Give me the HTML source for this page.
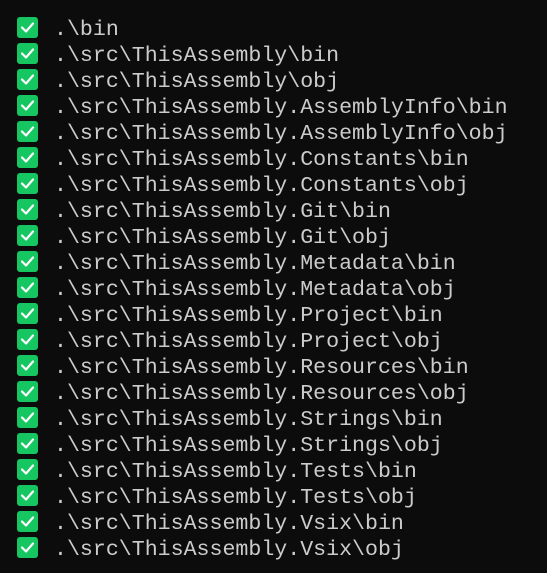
<!DOCTYPE html>
<html><head><style>
html,body{margin:0;padding:0;background:#0c0c0c;width:547px;height:573px;overflow:hidden}
.l{position:absolute;left:0;height:26px}
.b{position:absolute;left:17px;top:0;width:21px;height:21px;background:#16c660;border-radius:3px}
.b svg{position:absolute;left:0;top:0}
.t{position:absolute;left:54px;top:0;font-family:"Liberation Mono",monospace;font-size:21.6px;line-height:26px;color:#cccccc;white-space:pre}
</style></head><body>
<div id="c"></div>
<script>
const items=[".\\bin",".\\src\\ThisAssembly\\bin",".\\src\\ThisAssembly\\obj",".\\src\\ThisAssembly.AssemblyInfo\\bin",".\\src\\ThisAssembly.AssemblyInfo\\obj",".\\src\\ThisAssembly.Constants\\bin",".\\src\\ThisAssembly.Constants\\obj",".\\src\\ThisAssembly.Git\\bin",".\\src\\ThisAssembly.Git\\obj",".\\src\\ThisAssembly.Metadata\\bin",".\\src\\ThisAssembly.Metadata\\obj",".\\src\\ThisAssembly.Project\\bin",".\\src\\ThisAssembly.Project\\obj",".\\src\\ThisAssembly.Resources\\bin",".\\src\\ThisAssembly.Resources\\obj",".\\src\\ThisAssembly.Strings\\bin",".\\src\\ThisAssembly.Strings\\obj",".\\src\\ThisAssembly.Tests\\bin",".\\src\\ThisAssembly.Tests\\obj",".\\src\\ThisAssembly.Vsix\\bin",".\\src\\ThisAssembly.Vsix\\obj"];
let h="";
items.forEach((s,i)=>{h+=`<div class="l" style="top:${17+i*26}px"><div class="b"><svg width="21" height="21"><path d="M5 10.5 L9 14.5 L16 6.5" stroke="#fff" stroke-width="2.2" fill="none" stroke-linecap="round" stroke-linejoin="round"/></svg></div><div class="t"></div></div>`;});
document.getElementById("c").innerHTML=h;
document.querySelectorAll(".t").forEach((e,i)=>e.textContent=items[i]);
</script>
</body></html>
